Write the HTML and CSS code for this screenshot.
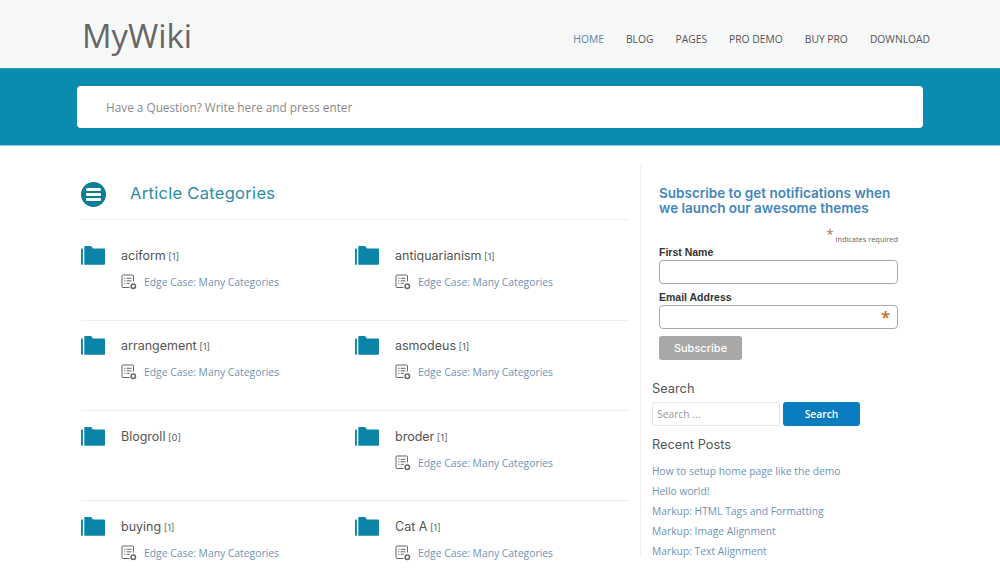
FILE: index.html
```html
<!DOCTYPE html>
<html lang="en">
<head>
  <meta charset="UTF-8" />
  <meta name="viewport" content="width=device-width, initial-scale=1.0"/>
  <title>MyWiki</title>
  <link rel="stylesheet" href="styles.css">
</head>
<body>

<!-- Header -->
<header class="site-header">
  <a class="logo" href="#">MyWiki</a>
  <nav class="main-nav">
    <a class="active" href="#">HOME</a>
    <a href="#">BLOG</a>
    <a href="#">PAGES</a>
    <a href="#">PRO DEMO</a>
    <a href="#">BUY PRO</a>
    <a href="#">DOWNLOAD</a>
  </nav>
</header>

<!-- Search band -->
<div class="search-band">
  <div class="search-box">Have a Question? Write here and press enter</div>
</div>

<svg class="defs" width="0" height="0">
  <symbol id="folder" viewBox="0 0 24 19">
    <path d="M0 3.5v14.2c0 .7.4 1.1 1 1.1h.9V2.6H1c-.6 0-1 .3-1 .9z"/>
    <path d="M3.3 18.800V.9c0-.5.3-.9.8-.9h5.400c.5 0 .8.200 1.100.6L12 2.600h11c.6 0 1 .4 1 1v14.200c0 .6-.4 1-1 1z"/>
  </symbol>
  <symbol id="post" viewBox="0 0 16 16">
    <path class="post-line" d="M12.500 7.500V2c0-.6-.4-1-1-1H2c-.6 0-1 .4-1 1v10.500c0 .6.4 1 1 1h6.500"/>
    <path class="post-line" d="M3.200 4.300h1.200M5.700 4.300h4.800M3.200 6.800h1.200M5.700 6.800h4.800M3.200 9.300h1.200M5.700 9.300h3"/>
    <circle class="post-line post-gear" cx="12.300" cy="12.300" r="2.200"/>
  </symbol>
</svg>

<div class="content">
  <!-- Categories -->
  <main class="categories">
    <div class="section-title">
      <span class="title-icon"><i></i><i></i><i></i></span>
      <h1>Article Categories</h1>
    </div>

    <div class="cat-row">
      <div class="cat">
        <svg class="folder"><use href="#folder"/></svg>
        <div class="cat-body">
          <h3>aciform <small>[1]</small></h3>
          <a class="post" href="#"><svg><use href="#post"/></svg>Edge Case: Many Categories</a>
        </div>
      </div>
      <div class="cat">
        <svg class="folder"><use href="#folder"/></svg>
        <div class="cat-body">
          <h3>antiquarianism <small>[1]</small></h3>
          <a class="post" href="#"><svg><use href="#post"/></svg>Edge Case: Many Categories</a>
        </div>
      </div>
    </div>

    <div class="cat-row">
      <div class="cat">
        <svg class="folder"><use href="#folder"/></svg>
        <div class="cat-body">
          <h3>arrangement <small>[1]</small></h3>
          <a class="post" href="#"><svg><use href="#post"/></svg>Edge Case: Many Categories</a>
        </div>
      </div>
      <div class="cat">
        <svg class="folder"><use href="#folder"/></svg>
        <div class="cat-body">
          <h3>asmodeus <small>[1]</small></h3>
          <a class="post" href="#"><svg><use href="#post"/></svg>Edge Case: Many Categories</a>
        </div>
      </div>
    </div>

    <div class="cat-row">
      <div class="cat">
        <svg class="folder"><use href="#folder"/></svg>
        <div class="cat-body">
          <h3>Blogroll <small>[0]</small></h3>
        </div>
      </div>
      <div class="cat">
        <svg class="folder"><use href="#folder"/></svg>
        <div class="cat-body">
          <h3>broder <small>[1]</small></h3>
          <a class="post" href="#"><svg><use href="#post"/></svg>Edge Case: Many Categories</a>
        </div>
      </div>
    </div>

    <div class="cat-row">
      <div class="cat">
        <svg class="folder"><use href="#folder"/></svg>
        <div class="cat-body">
          <h3>buying <small>[1]</small></h3>
          <a class="post" href="#"><svg><use href="#post"/></svg>Edge Case: Many Categories</a>
        </div>
      </div>
      <div class="cat">
        <svg class="folder"><use href="#folder"/></svg>
        <div class="cat-body">
          <h3>Cat A <small>[1]</small></h3>
          <a class="post" href="#"><svg><use href="#post"/></svg>Edge Case: Many Categories</a>
        </div>
      </div>
    </div>
  </main>

  <!-- Sidebar -->
  <aside class="sidebar">
    <form class="subscribe">
      <h2>Subscribe to get notifications when we launch our awesome themes</h2>
      <p class="required"><span>*</span> indicates required</p>
      <label>First Name</label>
      <div class="field"></div>
      <label>Email Address</label>
      <div class="field"><span class="star">*</span></div>
      <div class="sub-btn">Subscribe</div>
    </form>

    <h4 class="search-title">Search</h4>
    <div class="side-search">
      <div class="side-input">Search ...</div>
      <div class="side-btn">Search</div>
    </div>

    <h4 class="recent-title">Recent Posts</h4>
    <ul class="recent">
      <li><a href="#">How to setup home page like the demo</a></li>
      <li><a href="#">Hello world!</a></li>
      <li><a href="#">Markup: HTML Tags and Formatting</a></li>
      <li><a href="#">Markup: Image Alignment</a></li>
      <li><a href="#">Markup: Text Alignment</a></li>
    </ul>
  </aside>
</div>

</body>
</html>
```

FILE: styles.css
```css
html, body { height: 581px; overflow: hidden; }
body { font-family: "Open Sans", Arial, sans-serif; margin: 0; padding: 0; background: #fff; color: #555; }
a { text-decoration: none; }
.defs { position: absolute; }

.site-header { height: 68px; background: #f6f7f7; display: flex; justify-content: space-between; align-items: center; padding: 0 70px 0 82px; }
.logo { font-size: 32.800px; color: #666; margin-top: 2px; }
.main-nav { display: flex; gap: 22px; margin-top: 10px; }
.main-nav a { font-size: 10.300px; color: #555; }
.main-nav a.active { color: #5b84b1; }

.search-band { height: 78px; background: #0b8bb0; border-top: 1px solid #2f9fc0; border-bottom: 1px solid #8fd0e2; box-sizing: border-box; padding: 17px 77px 0; }
.search-box { height: 42px; background: #fff; border-radius: 4px; padding-left: 29px; font-size: 11.800px; line-height: 43px; color: #8a8a8a; }

.content { display: flex; padding: 19px 0 0 81px; }

.categories { width: 548px; }
.section-title { display: flex; align-items: center; height: 54px; margin-bottom: 0; border-bottom: 1px solid #f0f0f0; }
.title-icon { width: 25px; height: 25px; border-radius: 50%; background: #0b7d99; display: flex; flex-direction: column; justify-content: center; gap: 2px; align-items: center; margin-top: 4px; }
.title-icon i { display: block; width: 15px; height: 3px; background: #fff; border-radius: 1px; }
.section-title h1 { font-family: "Inter", sans-serif; font-size: 16.500px; font-weight: 400; color: #2b8ca6; margin: 2px 0 0 24px; letter-spacing: .3px; }

.cat-row { display: flex; height: 90px; border-bottom: 1px solid #eee; box-sizing: border-box; }
.cat-row:nth-child(2) { height: 101px; padding-top: 10px; }
.cat-row:nth-child(3) .cat { padding-top: 15px; }
.cat-row:last-child { border-bottom: none; }
.cat { width: 274px; display: flex; padding-top: 16px; box-sizing: border-box; }
.folder { width: 24px; height: 19px; fill: #0b84a8; flex: none; margin-right: 16px; }
.cat-body h3 { font-family: "Inter", sans-serif; font-size: 12.500px; font-weight: 400; color: #555; margin: 0; line-height: 20px; }
.cat-body small { font-size: 9.500px; color: #666; margin-left: -1px; }
.post { display: flex; align-items: center; font-size: 10.350px; color: #6f93b8; margin-top: 6px; height: 18px; }
.post svg { width: 16px; height: 16px; margin-right: 7px; }
.post-line { fill: none; stroke: #666; stroke-width: 1; }
.post-gear { stroke-width: 1.500; }

.sidebar { width: 260px; margin-left: 11px; height: 392px; border-left: 1px solid #f0f0f0; padding-left: 11px; }
.subscribe { padding: 0 0 0 7px; width: 239px; margin-top: 21px; }
.subscribe h2 { font-family: "Inter", sans-serif; font-size: 13.500px; font-weight: 600; line-height: 15px; color: #3f86bd; margin: 0; }
.required { text-align: right; font-size: 7.400px; color: #666; margin: 12px 0 0; line-height: 12px; }
.required span { color: #b5703a; font-size: 13px; line-height: 1; vertical-align: 3px; }
.subscribe label { display: block; font-family: "Liberation Sans", sans-serif; font-size: 10.500px; font-weight: 700; color: #333; line-height: 14px; margin-bottom: 1px; }
.field { height: 22px; border: 1px solid #aaa; border-radius: 4px; margin-bottom: 6px; display: flex; justify-content: flex-end; align-items: center; padding-right: 7px; background: #fff; }
.star { color: #c9782c; font-size: 16px; font-weight: 700; line-height: 22px; }
.sub-btn { width: 83px; height: 24px; border-radius: 3px; background: #a8a8a8; color: #fff; font-family: "Inter", sans-serif; font-size: 11px; font-weight: 500; line-height: 24px; text-align: center; margin-top: 7px; }

.search-title, .recent-title { font-family: "Inter", sans-serif; font-size: 12.800px; font-weight: 400; color: #555; margin: 0; line-height: 18px; }
.search-title { margin-top: 20px; }
.side-search { display: flex; gap: 3px; margin-top: 4px; }
.side-input { width: 122px; height: 22px; border: 1px solid #e6e6e6; border-radius: 3px; font-size: 10.300px; line-height: 22px; color: #999; padding-left: 4px; }
.side-btn { width: 77px; height: 24px; background: #0a7cc0; border-radius: 3px; color: #fff; font-size: 10.300px; font-weight: 600; line-height: 24px; text-align: center; }
.recent-title { margin-top: 10px; }
.recent { list-style: none; margin: 7px 0 0; padding: 0; }
.recent li { height: 20px; line-height: 20px; font-size: 10.300px; }
.recent a { color: #6f93b8; }
```
